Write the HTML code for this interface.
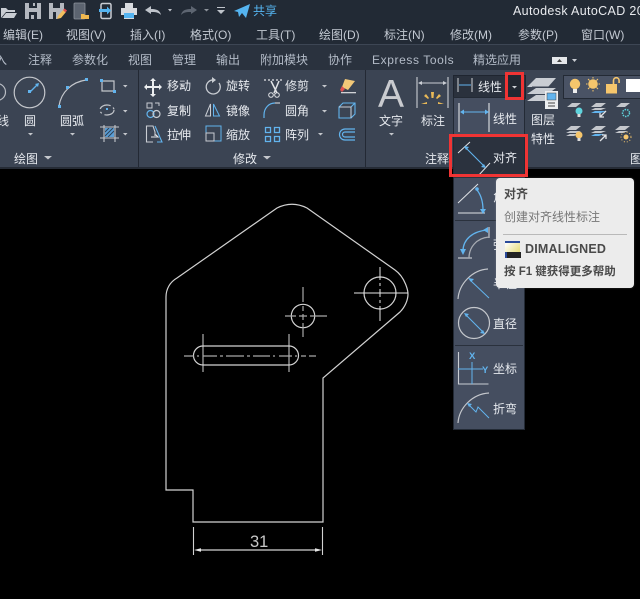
<!DOCTYPE html>
<html><head><meta charset="utf-8"><style>
html,body{margin:0;padding:0;background:#000}
#p{position:relative;width:640px;height:599px;overflow:hidden;background:#000;font-family:"Liberation Sans","Noto Sans CJK SC",sans-serif}
.t{position:absolute;white-space:nowrap;font-size:12px;line-height:14px;color:#e6e9ee}
.m{color:#c3c9d2}
.tb{color:#b4bcc8}
svg{position:absolute;left:0;top:0}
</style></head><body><div id="p">
<div style="position:absolute;left:0;top:0;width:640px;height:44px;background:#222a35"></div>
<div style="position:absolute;left:0;top:44px;width:640px;height:1px;background:#3d4654"></div>
<div style="position:absolute;left:0;top:45px;width:640px;height:25px;background:#2a323e"></div>
<div style="position:absolute;left:0;top:70px;width:640px;height:97px;background:#3b4453"></div>
<div style="position:absolute;left:0;top:167px;width:640px;height:2px;background:#252b35"></div>
<div style="position:absolute;left:138px;top:70px;width:1px;height:97px;background:#232934"></div>
<div style="position:absolute;left:365px;top:70px;width:1px;height:97px;background:#232934"></div>

<span class="t" style="left:513px;top:4px;color:#e8eaee;font-size:12.5px;letter-spacing:.35px">Autodesk AutoCAD 20</span>
<span class="t" style="left:253px;top:4px;color:#55b4f0;font-size:12px">共享</span>

<span class="t m" style="left:3px;top:28px">编辑(E)</span>
<span class="t m" style="left:66px;top:28px">视图(V)</span>
<span class="t m" style="left:130px;top:28px">插入(I)</span>
<span class="t m" style="left:190px;top:28px">格式(O)</span>
<span class="t m" style="left:256px;top:28px">工具(T)</span>
<span class="t m" style="left:319px;top:28px">绘图(D)</span>
<span class="t m" style="left:384px;top:28px">标注(N)</span>
<span class="t m" style="left:450px;top:28px">修改(M)</span>
<span class="t m" style="left:518px;top:28px">参数(P)</span>
<span class="t m" style="left:581px;top:28px">窗口(W)</span>

<span class="t tb" style="left:-5px;top:53px">入</span>
<span class="t tb" style="left:28px;top:53px">注释</span>
<span class="t tb" style="left:72px;top:53px">参数化</span>
<span class="t tb" style="left:128px;top:53px">视图</span>
<span class="t tb" style="left:172px;top:53px">管理</span>
<span class="t tb" style="left:216px;top:53px">输出</span>
<span class="t tb" style="left:260px;top:53px">附加模块</span>
<span class="t tb" style="left:328px;top:53px">协作</span>
<span class="t tb" style="left:372px;top:53px;letter-spacing:.6px">Express Tools</span>
<span class="t tb" style="left:473px;top:53px">精选应用</span>

<span class="t" style="left:-3px;top:114px">线</span>
<span class="t" style="left:24px;top:114px">圆</span>
<span class="t" style="left:60px;top:114px">圆弧</span>
<span class="t" style="left:14px;top:152px">绘图</span>
<span class="t" style="left:167px;top:79px">移动</span><span class="t" style="left:167px;top:104px">复制</span><span class="t" style="left:167px;top:128px">拉伸</span>
<span class="t" style="left:226px;top:79px">旋转</span><span class="t" style="left:226px;top:104px">镜像</span><span class="t" style="left:226px;top:128px">缩放</span>
<span class="t" style="left:285px;top:79px">修剪</span><span class="t" style="left:285px;top:104px">圆角</span><span class="t" style="left:285px;top:128px">阵列</span>
<span class="t" style="left:233px;top:152px">修改</span>
<span class="t" style="left:379px;top:114px">文字</span>
<span class="t" style="left:421px;top:114px">标注</span>
<span class="t" style="left:425px;top:152px">注释</span>
<span class="t" style="left:531px;top:113px">图层</span>
<span class="t" style="left:531px;top:132px">特性</span>
<span class="t" style="left:630px;top:152px">图</span>

<div style="position:absolute;left:453px;top:75px;width:71px;height:22px;background:#2a313d;border:1px solid #1f2530"></div>
<div style="position:absolute;left:506px;top:75px;width:18px;height:22px;background:#222832"></div>
<div style="position:absolute;left:453px;top:97px;height:333px;background:#454e60;border:1px solid #232a35;box-sizing:border-box;width:72px"></div>
<div style="position:absolute;left:454px;top:135px;width:70px;height:43px;background:#2b323e"></div>
<div style="position:absolute;left:455px;top:345px;width:68px;height:1px;background:#2a313d"></div>
<div style="position:absolute;left:455px;top:220px;width:68px;height:1px;background:#2a313d"></div>
<div style="position:absolute;left:563px;top:75px;width:77px;height:22px;background:#4a5365;border:1px solid #232a35"></div>

<span class="t" style="left:478px;top:80px">线性</span>
<span class="t" style="left:493px;top:112px">线性</span>
<span class="t" style="left:493px;top:151px">对齐</span>
<span class="t" style="left:493px;top:190px">角度</span>
<span class="t" style="left:493px;top:238px">弧长</span>
<span class="t" style="left:493px;top:277px">半径</span>
<span class="t" style="left:493px;top:317px">直径</span>
<span class="t" style="left:493px;top:362px">坐标</span>
<span class="t" style="left:493px;top:402px">折弯</span>

<svg width="640" height="599" viewBox="0 0 640 599" fill="none">
<!-- QAT -->
<path d="M1 18V8h5l2 2h7v2H6ZM2 18l4-5h11l-3 5Z" fill="#c9cdd3"/>
<path d="M25 3h16v16H25ZM29 3v5h8V3ZM29 12v7h8v-7Z" fill="#b4b8bf" fill-rule="evenodd"/><rect x="33" y="3" width="2" height="3" fill="#b4b8bf"/><rect x="31" y="15" width="3" height="4" fill="#b4b8bf"/>
<path d="M49 3h15v8l-7 8h-8ZM53 3v5h7V3ZM53 12v7h3v-7Z" fill="#b4b8bf" fill-rule="evenodd"/><path d="M58 16l5-6 3 2-5 6-4 1Z" fill="#f2bf5e"/><path d="M63 10l1.500-1.500 2.500 2-1.500 2Z" fill="#e05050"/>
<rect x="74" y="3" width="11" height="16" rx="1" fill="#5c6470" stroke="#8d939c" stroke-width=".8"/><path d="M81 19v-5h3l1 1h4v4Z" fill="#f0b84f"/>
<rect x="101" y="3.500" width="10" height="15" rx="1.500" stroke="#c9cdd3" stroke-width="1.500"/><path d="M99 9h8v-2.500l4 4-4 4V12h-8Z" fill="#55b4f0"/>
<path d="M125 3h8v5h-8ZM121 8h16v7h-3v4h-10v-4h-3Z" fill="#d8dbdf"/><rect x="124" y="13" width="10" height="5" fill="#55b4f0"/>
<path d="M145 10l6-4v3c5 0 9 1 10 6-3-3-6-3-10-3v2Z" fill="#bfc4cb"/>
<path d="M168 9h4l-2 2.500Z" fill="#bfc4cb"/>
<path d="M197 10l-6-4v3c-5 0-9 1-10 6 3-3 6-3 10-3v2Z" fill="#5d6571"/>
<path d="M204 9h5l-2.500 2.500Z" fill="#8d939c"/>
<path d="M217 7h8v1h-8ZM217 10h8l-4 4Z" fill="#bfc4cb"/>
<path d="M234 11l16-7-4 14-4-5-3 4-1-5Z" fill="#55b4f0"/>
<!-- tab small -->
<rect x="552" y="57" width="15" height="7" fill="#e5e7ea"/><path d="M557 62l2.500-3 2.500 3Z" fill="#444"/><path d="M572 59h5l-2.500 3Z" fill="#c9cdd3"/>
<!-- draw panel -->
<circle cx="-3" cy="92" r="8.500" stroke="#b9bdc4" stroke-width="1.200"/>
<circle cx="29.500" cy="92.500" r="15.300" stroke="#c4c7cc" stroke-width="1.200"/>
<path d="M30 92l8-8" stroke="#62b4ee" stroke-width="1.300"/><rect x="28" y="90" width="3" height="3" fill="#62b4ee"/><path d="M39 83l-1 4-3-3Z" fill="#62b4ee"/>
<path d="M59 106c2-14 13-24 27-26" stroke="#c4c7cc" stroke-width="1.200"/>
<rect x="58" y="105" width="3" height="3" fill="#62b4ee"/><rect x="66" y="86" width="3" height="3" fill="#62b4ee"/><rect x="85" y="78" width="3" height="3" fill="#62b4ee"/>
<path d="M28 133h5l-2.500 2.500ZM70 133h5l-2.500 2.500ZM44 156h8l-4 3.500ZM123 85h4.500l-2.200 2.500ZM123 110h4.500l-2.200 2.500ZM123 133h4.500l-2.200 2.500ZM180 85h5l-2.500 2.500ZM180 110h5l-2.500 2.500ZM177 133h5l-2.500 2.500ZM263 156h8l-4 3.500ZM322 85h5l-2.500 2.500ZM322 110h5l-2.500 2.500ZM318 133h5l-2.500 2.500Z" fill="#c4c7cc"/>
<path d="M102 81h12v10h-12Z" stroke="#c4c7cc" stroke-width="1.200"/><rect x="100" y="79" width="3" height="3" fill="#62b4ee"/><rect x="113" y="90" width="3" height="3" fill="#62b4ee"/>
<ellipse cx="107" cy="110" rx="7" ry="5" stroke="#c4c7cc" stroke-width="1.200" stroke-dasharray="12 3 2 3"/><rect x="106" y="108" width="2" height="2" fill="#62b4ee"/>
<path d="M100 127h19M100 138h19M104 125v17M115 125v17" stroke="#c4c7cc" stroke-width="1.100"/><rect x="105" y="128" width="9" height="9" fill="#5a9ed6"/><path d="M105 136l8-8M108 137l6-6M105 132l4-4" stroke="#2c4156" stroke-width="1"/>
<!-- modify panel -->
<path d="M153 79v17M145 87h16" stroke="#eceef0" stroke-width="2"/><path d="M153 78l3 3h-6ZM153 97l3-3h-6ZM144 87l3-3v6ZM162 87l-3-3v6Z" fill="#eceef0"/>
<rect x="147" y="103" width="5" height="5" stroke="#c9cdd3"/><path d="M155 103h4v3" stroke="#c9cdd3"/>
<circle cx="150.500" cy="114" r="3.500" stroke="#62b4ee" stroke-width="1.200"/><circle cx="156.500" cy="114" r="3.500" stroke="#c9cdd3" stroke-width="1.200"/>
<path d="M153 142h-6.500v-16h6.500l2 6v4" stroke="#c9cdd3" stroke-width="1.100"/><path d="M155 126l7 16h-5" stroke="#62b4ee" stroke-width="1.100"/><path d="M151 137h7l-2.500-2.500" stroke="#e6e9ee" stroke-width="1.100"/>
<path d="M214 80a7 7 0 1 0 5 3" stroke="#c9cdd3" stroke-width="1.300"/><path d="M212 77l4 3-4 3Z" fill="#c9cdd3"/>
<path d="M205.500 116l5-12v12Z" stroke="#c9cdd3"/><path d="M213.500 104l6 12h-6Z" stroke="#62b4ee"/>
<rect x="206" y="126" width="15" height="15" stroke="#62b4ee"/><rect x="206" y="133" width="8" height="8" stroke="#c9cdd3"/>
<path d="M264 80h20" stroke="#e2e4e7" stroke-dasharray="2 2" stroke-width="1.300"/><path d="M271 81l6 12M279 81l-5 12" stroke="#e2e4e7" stroke-width="1.500"/><circle cx="271" cy="95" r="2.300" stroke="#e2e4e7"/><circle cx="277" cy="95" r="2.300" stroke="#e2e4e7"/>
<path d="M264 118v-3c0-7 5-12 11-12" stroke="#62b4ee" stroke-width="1.200"/><path d="M275 103h5" stroke="#c9cdd3" stroke-width="1.200"/>
<path d="M265.500 127.500h5v5h-5ZM274.500 127.500h5v5h-5ZM265.500 136.500h5v5h-5ZM274.500 136.500h5v5h-5Z" stroke="#62b4ee" stroke-width="1.300"/>
<path d="M345 79l10 2-7 9-6-3Z" fill="#f2c878"/><rect x="341" y="92" width="15" height="1.300" fill="#d0d2d6"/><path d="M342 86l3 3-3 3-2-2Z" fill="#e05050"/>
<path d="M339 107h12v11h-12ZM339 107l4-4h12v11l-4 4M351 107l4-4" stroke="#62b4ee" stroke-width="1.100"/><path d="M339 107h12v11" stroke="#c9cdd3"/>
<path d="M355 129h-10a5 5 0 0 0 0 11h10M355 132h-10a2.500 2.500 0 0 0 0 5h10" stroke="#62b4ee" stroke-width="1.200"/>
<!-- annotation -->
<text x="378" y="107" font-family="Liberation Sans" font-size="39" fill="#c9cbcf">A</text>
<path d="M389 133h5l-2.500 2.500Z" fill="#c4c7cc"/>
<path d="M417 77v31M448 77v31M419 83h27" stroke="#c9cdd3" stroke-width="1.100"/><path d="M418 83l4-2v4ZM447 83l-4-2v4Z" fill="#c9cdd3"/>
<path d="M431 92h3l-.500 6h-2ZM424 96l2-2 3 4-1 1ZM441 96l-2-2-3 4 1 1ZM421 104l6-2v2ZM444 104l-6-2v2Z" fill="#e9b957"/>
<!-- linear dropdown -->
<path d="M458 78v14M472 78v14" stroke="#d0d3d8" stroke-width="1"/><path d="M459 85h12" stroke="#62b4ee"/>
<path d="M512 86h5l-2.500 2.500Z" fill="#d0d3d8"/>
<path d="M459 103v29M489 103v29" stroke="#d4d6da" stroke-width="1.200"/><path d="M461 112h27" stroke="#62b4ee" stroke-width="1.100"/><path d="M460 112l4-2.500v5ZM489 112l-4-2.500v5Z" fill="#62b4ee"/>
<path d="M458 153l12-11M478 176l12-13" stroke="#e0e2e6" stroke-width="1"/><path d="M465 147l20 20" stroke="#62b4ee" stroke-width="1.100"/><path d="M464 146l5 1-3 3ZM486 168l-5-1 3-3Z" fill="#62b4ee"/>
<path d="M458 203l20-19M458 213h27" stroke="#dfe2e6" stroke-width="1"/><path d="M477 190c4 5 6 12 6 20" stroke="#62b4ee" stroke-width="1.300"/><circle cx="477" cy="189" r="1.800" fill="#62b4ee"/><path d="M480 209h6l-3 5Z" fill="#62b4ee"/>
<path d="M458 258h14M489 227v11" stroke="#dfe2e6" stroke-width="1"/><path d="M463 251c0-11 9-20 25-21" stroke="#62b4ee" stroke-width="1.300"/><path d="M460 249h6l-3 6ZM488 227v6l-5-3Z" fill="#62b4ee"/><path d="M469 258c0-10 7-20 20-21" stroke="#a8acb3" stroke-width="1.300"/>
<path d="M458 299c1-15 14-29 30-30" stroke="#c4c7cc" stroke-width="1.200"/><path d="M470 280l19 18" stroke="#62b4ee"/><path d="M468 278l6 1-3 3Z" fill="#62b4ee"/>
<circle cx="474" cy="323" r="15.500" stroke="#c4c7cc" stroke-width="1.200"/><path d="M466 315l17 17" stroke="#62b4ee" stroke-width="1.100"/><path d="M464 313l5 1-3 3ZM485 334l-5-1 3-3Z" fill="#62b4ee"/>
<path d="M458.500 352v32h30" stroke="#c9cdd3" stroke-width="1.100"/><path d="M458 369h25M472 362v22" stroke="#62b4ee" stroke-width="1"/>
<text x="469" y="359" font-family="Liberation Sans" font-weight="bold" font-size="9.500" fill="#62b4ee">X</text>
<text x="482" y="373" font-family="Liberation Sans" font-weight="bold" font-size="9.500" fill="#62b4ee">Y</text>
<path d="M458 423c1-15 14-29 31-30" stroke="#c4c7cc" stroke-width="1.200"/><path d="M468 404l8 8 2-5 11 11" stroke="#62b4ee"/><path d="M467 403l5 1-3 3Z" fill="#62b4ee"/>
<!-- layers -->
<path d="M527 87l9-9h20l-8 9ZM527 94l9-6h20l-8 6ZM527 101l9-6h20l-8 6Z" fill="#c9cdd3"/><path d="M532 87h20" stroke="#3b4453"/>
<rect x="545" y="91" width="13" height="18" fill="#eceef0"/><rect x="547" y="93" width="9" height="7" fill="#62b4ee" stroke="#444" stroke-width=".5"/><path d="M548 103h7M555 106h-7" stroke="#444"/>
<circle cx="575" cy="84" r="5.200" fill="#f6c66c"/><rect x="573" y="89" width="4" height="4" fill="#eee"/>
<circle cx="593" cy="84" r="4.800" fill="#f6c66c"/><path d="M593 77v1.500M593 90v1.500M586 84h1.500M598.500 84h1.500M588 79l1.500 1.500M598 79l-1.500 1.500M588 89l1.500-1.500M598 89l-1.500-1.500" stroke="#f6c66c"/>
<rect x="606" y="84" width="11" height="9.500" fill="#f6c66c"/><path d="M613.500 84v-3.500a2.800 2.800 0 0 1 5.600 0v2.500" stroke="#f6c66c" stroke-width="1.600"/>
<rect x="626" y="79" width="14" height="13" fill="#fff"/>
<path d="M567 107l5-4h9l-5 4Z M566 130l5-4h10l-5 4ZM566 133l4-2h11l-5 2ZM566 136l4-2h9l-5 2ZM591 107l5-4h10l-5 4ZM591 110l4-2h11l-5 2ZM591 130l5-4h10l-5 4ZM591 133l4-2h11l-5 2ZM616 107l5-4h9l-5 4ZM615 130l5-4h10l-5 4ZM615 133l4-2h9l-5 2Z" fill="#c4c7cc"/>
<circle cx="579" cy="111" r="3.500" fill="#5fd3dc"/><rect x="577.500" y="114" width="3" height="3" fill="#ddd"/>
<path d="M591 113l4-2h11l-5 2Z" fill="#62b4ee"/><path d="M600 117l6-6M600 113v4h4" stroke="#e0e2e6" stroke-width="1.300"/>
<circle cx="626" cy="113" r="3.500" stroke="#5fd3dc" stroke-width="1.500" stroke-dasharray="1.500 1"/>
<circle cx="579" cy="135" r="3.500" fill="#f6c66c"/><rect x="577.500" y="138" width="3" height="3" fill="#ddd"/>
<path d="M591 136l4-2h9l-5 2Z" fill="#62b4ee"/><path d="M600 141l6-6M602 135h4v4" stroke="#e0e2e6" stroke-width="1.300"/>
<circle cx="626" cy="137" r="2.500" fill="#f6c66c"/><circle cx="626" cy="137" r="5" stroke="#f6c66c" stroke-dasharray="1 2"/>
<!-- red frames -->
<rect x="506.500" y="73.500" width="16" height="25" stroke="#f03434" stroke-width="3"/>
<rect x="450.500" y="135.500" width="76" height="40" stroke="#f03434" stroke-width="3"/>
<!-- drawing -->
<g stroke="#d2d2d2" stroke-width="1.200">
<path d="M166 490V297c0-8 4-15 11-19l100-70c10-5 20-5 30 0l88 62c11 8 13 22 13 24 0 6-3 13-8 18l-77 66v144H193v-32Z"/>
<circle cx="380" cy="293" r="16"/>
<circle cx="303" cy="316" r="11.700"/>
<path d="M203 346h86a9.500 9.500 0 0 1 0 19h-86a9.500 9.500 0 0 1 0-19Z"/>
<path d="M203 334v38M289 334v38" stroke-width="1"/>
<path d="M354 293h54M380 267v13M380 283v3M380 289v8M380 300v3M380 306v15M369 293h3M375 293h10M387 293h3" stroke="#e6e6e6" stroke-width="1"/>
<path d="M285 316h11M299 316h8M310 316h7M317 316h10M303 287v15M303 306v5M303 314v6M303 323v14" stroke="#a8a8a8" stroke-width="1.200"/>
<path d="M184 356h10M197 356h2M203 356h14M220 356h3M226 356h18M247 356h3M253 356h17M273 356h2M279 356h13M295 356h2M301 356h5M309 356h7" stroke="#a8a8a8" stroke-width="1.300"/>
<path d="M193.500 527v28M322.500 527v28" stroke-width="1.100"/>
<path d="M200 550h116"/>
</g>
<path d="M194 550l7-1.800v3.600ZM322 550l-7-1.800v3.600Z" fill="#e8e8e8"/>
<text x="250" y="547" font-family="Liberation Sans" font-size="16.500" fill="#c8c8c8">31</text>
</svg>

<div style="position:absolute;left:496px;top:178px;width:138px;height:110px;background:#ececec;border-radius:4px;box-shadow:0 0 2px rgba(255,255,255,.2)">
<span class="t" style="left:8px;top:9px;color:#4a4a4a;font-weight:bold;font-size:12px">对齐</span>
<span class="t" style="left:8px;top:32px;color:#777;font-size:12px">创建对齐线性标注</span>
<div style="position:absolute;left:7px;top:56px;width:124px;height:1px;background:#b9b9b9"></div>
<div style="position:absolute;left:9px;top:63px;width:15px;height:9px;background:linear-gradient(135deg,#fff,#e6dc78);border-top:2px solid #2a4a9a"></div>
<div style="position:absolute;left:11px;top:74px;width:14px;height:6px;background:#222"></div>
<div style="position:absolute;left:9px;top:74px;width:2px;height:6px;background:#2a4a9a"></div>
<span class="t" style="left:29px;top:64px;color:#4a4a4a;font-weight:bold;font-size:12.500px;letter-spacing:.2px">DIMALIGNED</span>
<span class="t" style="left:8px;top:87px;color:#4a4a4a;font-weight:bold;font-size:11.500px">按 F1 键获得更多帮助</span>
</div>
</div></body></html>
